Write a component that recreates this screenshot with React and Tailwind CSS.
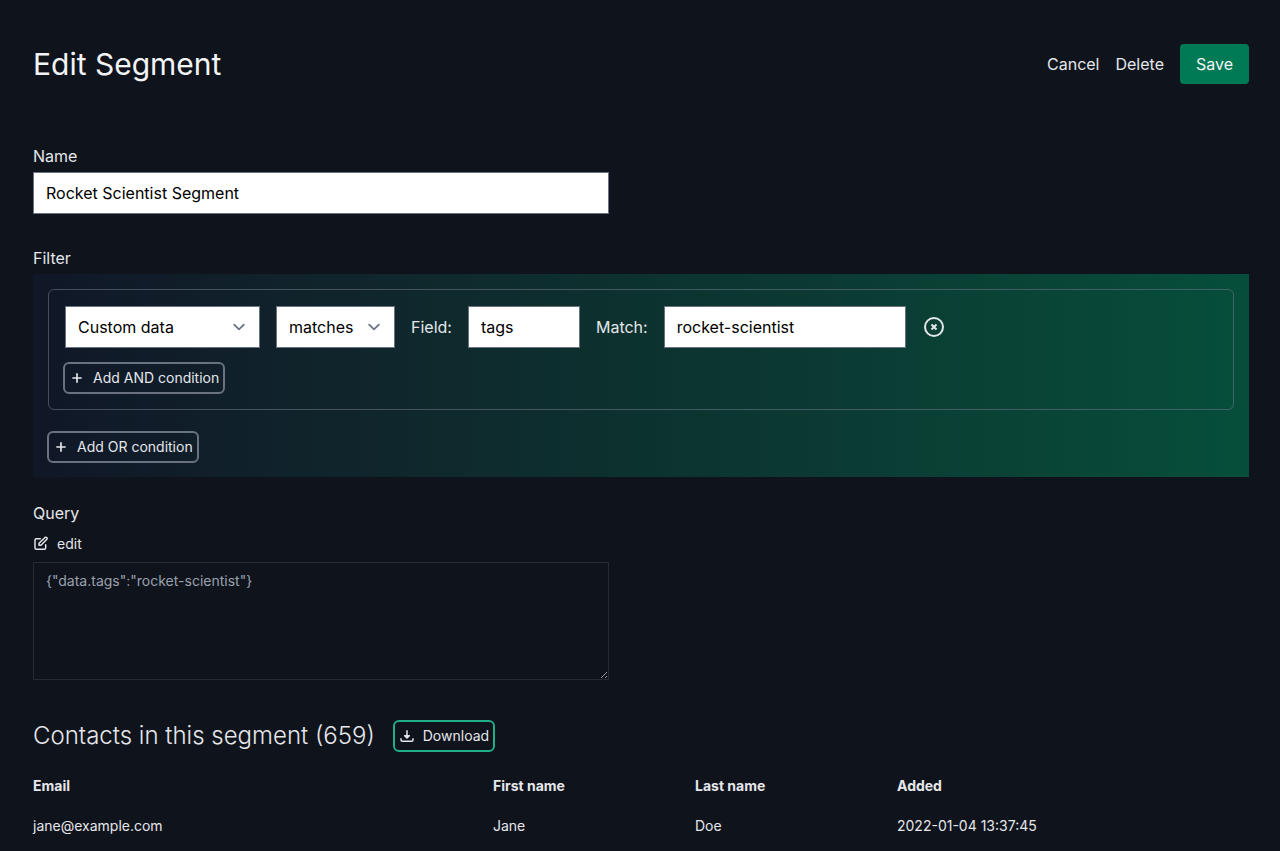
import React, { useState } from 'react';

const contacts = [
    { email: 'jane@example.com', firstName: 'Jane', lastName: 'Doe', added: '2022-01-04 13:37:45' },
];

const fieldClass = 'h-[42px] border border-gray-500 bg-white px-3 text-base text-black';
const outlineButton = 'inline-flex h-8 items-center rounded-md border-2 px-1 text-sm';

function PlusIcon() {
    return (
        <svg className="mr-2 h-4 w-4" viewBox="0 0 24 24" fill="none" stroke="currentColor" strokeWidth="2.5" aria-hidden="true">
            <path d="M12 5v14M5 12h14" />
        </svg>
    );
}

function EditIcon() {
    return (
        <svg className="mr-2 h-4 w-4" viewBox="0 0 24 24" fill="none" stroke="currentColor" strokeWidth="2.2" strokeLinecap="round" strokeLinejoin="round" aria-hidden="true">
            <path d="M11 4H5a2 2 0 00-2 2v12a2 2 0 002 2h12a2 2 0 002-2v-5M17.6 2.6a2 2 0 112.8 2.8L12 14H9v-3l8.6-8.4z" />
        </svg>
    );
}

function DownloadIcon() {
    return (
        <svg className="mr-2 h-4 w-4" viewBox="0 0 24 24" fill="none" stroke="currentColor" strokeWidth="2.2" strokeLinecap="round" strokeLinejoin="round" aria-hidden="true">
            <path d="M3 16v2a2 2 0 002 2h14a2 2 0 002-2v-2M12 4v10" />
            <path d="M8.5 11.5L12 15l3.5-3.5z" fill="currentColor" />
        </svg>
    );
}

function RemoveIcon() {
    return (
        <svg className="h-6 w-6" viewBox="0 0 24 24" fill="none" stroke="currentColor" strokeWidth="2" aria-hidden="true">
            <circle cx="12" cy="12" r="9" />
            <path d="M9.5 9.5l5 5m0-5l-5 5" />
        </svg>
    );
}

function Select({ label, value, onChange, options, className }) {
    return (
        <div className={`relative ${className}`}>
            <select
                aria-label={label}
                value={value}
                onChange={e => onChange(e.target.value)}
                className={`${fieldClass} w-full appearance-none`}
            >
                {options.map(option => <option key={option}>{option}</option>)}
            </select>
            <svg className="pointer-events-none absolute right-[9px] top-[9px] h-6 w-6 text-gray-500" viewBox="0 0 20 20" fill="none" stroke="currentColor" strokeWidth="1.5" strokeLinecap="round" strokeLinejoin="round" aria-hidden="true">
                <path d="M6 8l4 4 4-4" />
            </svg>
        </div>
    );
}

export default function App() {
    const [name, setName] = useState('Rocket Scientist Segment');
    const [type, setType] = useState('Custom data');
    const [operator, setOperator] = useState('matches');
    const [field, setField] = useState('tags');
    const [match, setMatch] = useState('rocket-scientist');

    return (
        <div className="min-h-screen bg-[#0f131b] pl-[33px] pr-[31px] pt-11 font-[Inter,sans-serif] text-base text-gray-200">
            <header className="flex items-center justify-between">
                <h1 className="text-3xl font-normal leading-10 text-gray-100">Edit Segment</h1>
                <div className="flex items-center gap-4">
                    <a href="#cancel">Cancel</a>
                    <button type="button">Delete</button>
                    <button type="submit" form="segment" className="h-10 rounded bg-emerald-700 px-4 text-gray-100">Save</button>
                </div>
            </header>

            <form id="segment" className="mt-[60px]" onSubmit={e => e.preventDefault()}>
                <label htmlFor="name" className="block">Name</label>
                <input id="name" value={name} onChange={e => setName(e.target.value)} className={`${fieldClass} mt-1 block w-full max-w-[576px]`} />

                <h2 className="mt-8">Filter</h2>
                <section className="mt-1 bg-linear-to-r from-[#101727] via-[#0c322f] to-[#064e3b] px-[15px] pb-3.5 pt-[15px]">
                    <div className="rounded-md border border-gray-500/60 p-4 pb-[15px]">
                        <div className="flex flex-wrap items-center gap-4">
                            <Select label="Type" value={type} onChange={setType} options={['Custom data', 'Email', 'First name', 'Last name']} className="w-[195px]" />
                            <Select label="Operator" value={operator} onChange={setOperator} options={['matches', 'includes']} className="w-[119px]" />
                            <label htmlFor="field">Field:</label>
                            <input id="field" value={field} onChange={e => setField(e.target.value)} className={`${fieldClass} w-28`} />
                            <label htmlFor="match">Match:</label>
                            <input id="match" value={match} onChange={e => setMatch(e.target.value)} className={`${fieldClass} w-[242px]`} />
                            <button type="button" aria-label="Remove condition"><RemoveIcon /></button>
                        </div>
                        <button type="button" className={`${outlineButton} -ml-0.5 mt-3.5 border-gray-500`}>
                            <PlusIcon />
                            Add AND condition
                        </button>
                    </div>
                    <button type="button" className={`${outlineButton} -ml-px mt-[21px] border-gray-500`}>
                        <PlusIcon />
                        Add OR condition
                    </button>
                </section>

                <label htmlFor="query" className="mt-6 block">Query</label>
                <button type="button" className="mt-[9px] flex items-center text-sm">
                    <EditIcon />
                    edit
                </button>
                <textarea
                    id="query"
                    disabled
                    rows="5"
                    value={'{"data.tags":"rocket-scientist"}'}
                    className="mt-2 block w-full max-w-[576px] border border-[#262a33] px-3 py-2 text-sm text-gray-400"
                />
            </form>

            <div className="mt-10 flex items-center gap-[18px]">
                <h2 className="text-2xl font-light text-gray-200">Contacts in this segment (659)</h2>
                <button type="button" className={`${outlineButton} border-[#1fae85]`}>
                    <DownloadIcon />
                    Download
                </button>
            </div>

            <table className="mt-3.5 w-full table-fixed text-left text-sm">
                <thead>
                    <tr className="h-10">
                        <th className="w-[460px] font-bold">Email</th>
                        <th className="w-[202px] font-bold">First name</th>
                        <th className="w-[202px] font-bold">Last name</th>
                        <th className="font-bold">Added</th>
                    </tr>
                </thead>
                <tbody>
                    {contacts.map(contact => (
                        <tr key={contact.email} className="h-10">
                            <td>{contact.email}</td>
                            <td>{contact.firstName}</td>
                            <td>{contact.lastName}</td>
                            <td>{contact.added}</td>
                        </tr>
                    ))}
                </tbody>
            </table>
        </div>
    );
}
